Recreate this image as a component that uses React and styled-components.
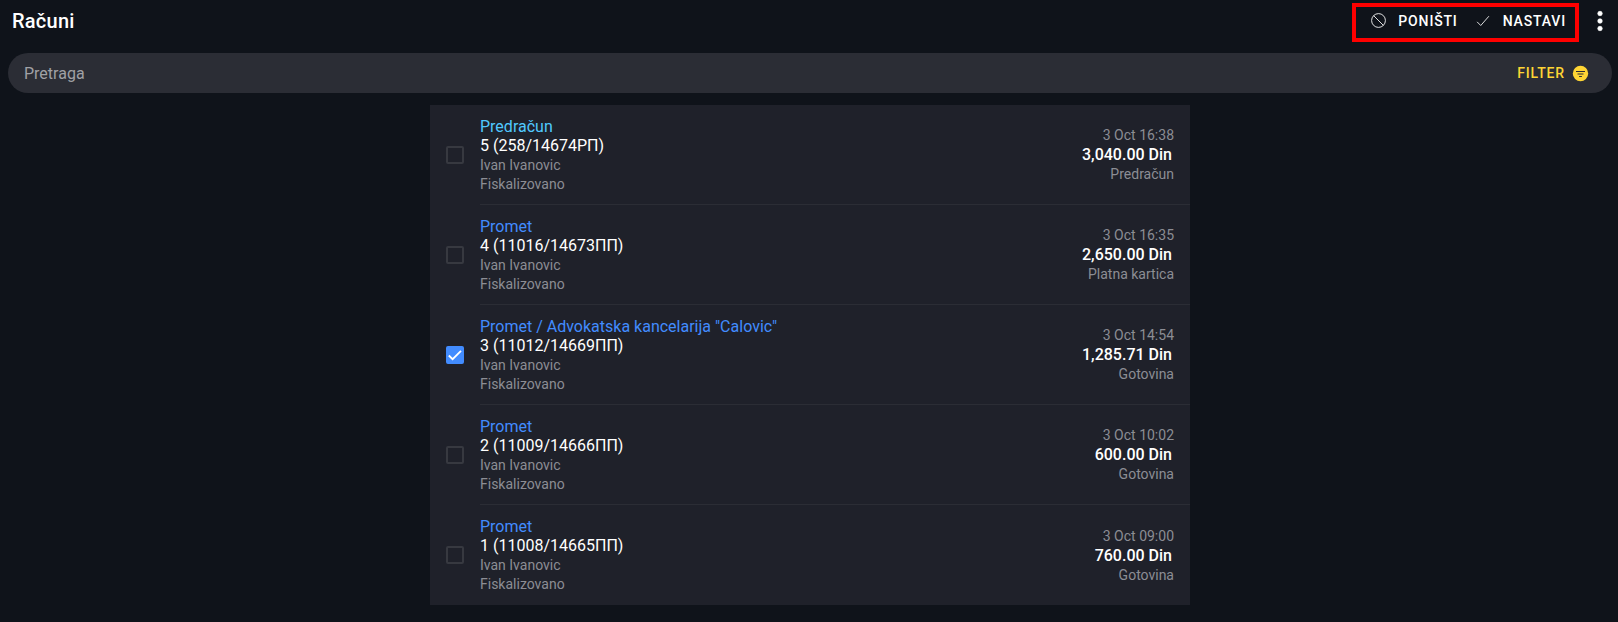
import React, { useState } from 'react'
import styled, { createGlobalStyle } from 'styled-components'
import { IoBanOutline, IoCheckmarkOutline, IoEllipsisVertical } from 'react-icons/io5'

const GlobalStyle = createGlobalStyle`
  * {
    box-sizing: border-box;
  }

  body {
    margin: 0;
    background-color: #0f131a;
    color: #fff;
    font-family: Roboto, sans-serif;
    font-size: 16px;
  }
`

const Header = styled.header`
  display: flex;
  align-items: center;
  height: 45px;
  padding: 0 6px 4px 12px;
`

const Title = styled.h1`
  flex: 1;
  margin: 0;
  font-size: 20px;
  font-weight: 500;
  line-height: 24px;
  letter-spacing: 0.0125em;
`

const Actions = styled.div`
  display: flex;
  align-items: center;
  gap: 16px;
  height: 39px;
  margin: 4px 9px 0 0;
  padding: 0 9px 4px 14px;
  border: 4px solid #f00;
`

const BarButton = styled.button`
  display: flex;
  align-items: center;
  gap: ${props => props.$gap || 0}px;
  padding: 0;
  border: 0;
  background: none;
  color: ${props => props.$color || '#fff'};
  font-family: inherit;
  font-size: 14px;
  font-weight: 500;
  line-height: 20px;
  letter-spacing: 0.06em;
  text-transform: uppercase;
  cursor: pointer;
`

const BanIcon = styled(IoBanOutline)`
  * {
    stroke-width: 26px;
  }
`

const CheckIcon = styled(IoCheckmarkOutline)`
  * {
    stroke-width: 24px;
  }
`

const DotsIcon = styled(IoEllipsisVertical)`
  * {
    stroke: currentColor;
    stroke-width: 14px;
  }
`

const FilterIcon = styled.svg`
  width: 19px;
  height: 19px;
  fill: #ffd534;
  stroke: #2b2d35;
  stroke-linecap: round;

  circle {
    stroke: none;
  }
`

const Search = styled.form`
  display: flex;
  align-items: center;
  height: 40px;
  margin: 8px 6px 12px 8px;
  padding: 0 22px 0 16px;
  border-radius: 20px;
  background-color: #2b2d35;
`

const SearchInput = styled.input`
  flex: 1;
  min-width: 0;
  padding: 0;
  border: 0;
  outline: 0;
  background: none;
  color: #fff;
  font-family: inherit;
  font-size: 16px;

  &::placeholder {
    color: #a0a1a5;
    opacity: 1;
  }
`

const Content = styled.main`
  padding: 0 6px 0 8px;
`

const List = styled.ul`
  max-width: 760px;
  margin: 0 auto;
  padding: 0;
  list-style: none;
  background-color: #1f212a;
`

const Row = styled.label`
  display: flex;
  align-items: center;
  gap: 16px;
  padding-left: 16px;
  cursor: pointer;
`

const Checkbox = styled.span`
  display: grid;
  flex: none;
  width: 18px;
  height: 18px;

  & > * {
    grid-area: 1 / 1;
  }
`

const CheckInput = styled.input`
  appearance: none;
  width: 18px;
  height: 18px;
  margin: 0;
  border: 2px solid #373940;
  border-radius: 2px;

  &:checked {
    border-color: #428cff;
    background-color: #428cff;
  }
`

const CheckMark = styled.svg`
  width: 18px;
  height: 18px;
  fill: none;
  stroke: #fff;
  stroke-width: 1.8;
  pointer-events: none;
`

const RowBody = styled.span`
  display: flex;
  flex: 1;
  align-items: center;
  min-height: 100px;
  padding-right: 16px;
  border-bottom: 1px solid #2b2d35;

  li:last-child & {
    border-bottom: 0;
  }
`

const Details = styled.span`
  display: flex;
  flex: 1;
  flex-direction: column;
  align-self: flex-start;
  padding: 12px 0 10px;
`

const Summary = styled.span`
  display: flex;
  flex-direction: column;
  align-items: flex-end;
  padding-top: 1px;
`

const Line = styled.span`
  color: ${props => props.$color || '#fff'};
  font-size: 16px;
  line-height: 19px;
`

const Note = styled(Line)`
  color: #8c8d94;
  font-size: 14px;

  ${Line} + & {
    margin-top: 1px;
  }

  & + & {
    margin-top: 0;
  }
`

const Amount = styled(Line)`
  padding-right: 2px;
  font-weight: 500;
`

const BLUE = '#428cff'
const SKY = '#50c8ff'

const invoices = [
  { id: 5, type: 'Predračun', color: SKY, number: '5 (258/14674РП)', date: '3 Oct 16:38', amount: '3,040.00 Din', method: 'Predračun' },
  { id: 4, type: 'Promet', color: BLUE, number: '4 (11016/14673ПП)', date: '3 Oct 16:35', amount: '2,650.00 Din', method: 'Platna kartica' },
  { id: 3, type: 'Promet / Advokatska kancelarija "Calovic"', color: BLUE, number: '3 (11012/14669ПП)', date: '3 Oct 14:54', amount: '1,285.71 Din', method: 'Gotovina' },
  { id: 2, type: 'Promet', color: BLUE, number: '2 (11009/14666ПП)', date: '3 Oct 10:02', amount: '600.00 Din', method: 'Gotovina' },
  { id: 1, type: 'Promet', color: BLUE, number: '1 (11008/14665ПП)', date: '3 Oct 09:00', amount: '760.00 Din', method: 'Gotovina' },
]

const Invoice = ({ invoice, checked, onChange }) => (
  <li>
    <Row>
      <Checkbox>
        <CheckInput type="checkbox" checked={checked} onChange={onChange} />
        {checked && (
          <CheckMark viewBox="0 0 18 18">
            <path d="M2.8 9.5 L6.6 13.2 L15 4.8" />
          </CheckMark>
        )}
      </Checkbox>
      <RowBody>
        <Details>
          <Line $color={invoice.color}>{invoice.type}</Line>
          <Line>{invoice.number}</Line>
          <Note>Ivan Ivanovic</Note>
          <Note>Fiskalizovano</Note>
        </Details>
        <Summary>
          <Note>{invoice.date}</Note>
          <Amount>{invoice.amount}</Amount>
          <Note>{invoice.method}</Note>
        </Summary>
      </RowBody>
    </Row>
  </li>
)

export default function App() {
  const [selected, setSelected] = useState([3])

  const toggle = id =>
    setSelected(selected.includes(id) ? selected.filter(s => s !== id) : [...selected, id])

  return (
    <>
      <GlobalStyle />
      <Header>
        <Title>Računi</Title>
        <Actions>
          <BarButton type="button" $gap={11} onClick={() => setSelected([])}>
            <BanIcon size={17} />
            Poništi
          </BarButton>
          <BarButton type="button" $gap={11}>
            <CheckIcon size={18} />
            Nastavi
          </BarButton>
        </Actions>
        <BarButton type="button" aria-label="Meni">
          <DotsIcon size={24} />
        </BarButton>
      </Header>
      <Search onSubmit={e => e.preventDefault()}>
        <SearchInput type="text" placeholder="Pretraga" aria-label="Pretraga" />
        <BarButton type="button" $color="#ffd534" $gap={6}>
          Filter
          <FilterIcon viewBox="0 0 19 19">
            <circle cx="9.5" cy="9.5" r="7.7" />
            <path d="M5.4 7.5 H13.6 M6.9 10 H12.1 M8.5 12.5 H10.5" />
          </FilterIcon>
        </BarButton>
      </Search>
      <Content>
        <List>
          {invoices.map(invoice => (
            <Invoice
              key={invoice.id}
              invoice={invoice}
              checked={selected.includes(invoice.id)}
              onChange={() => toggle(invoice.id)}
            />
          ))}
        </List>
      </Content>
    </>
  )
}
